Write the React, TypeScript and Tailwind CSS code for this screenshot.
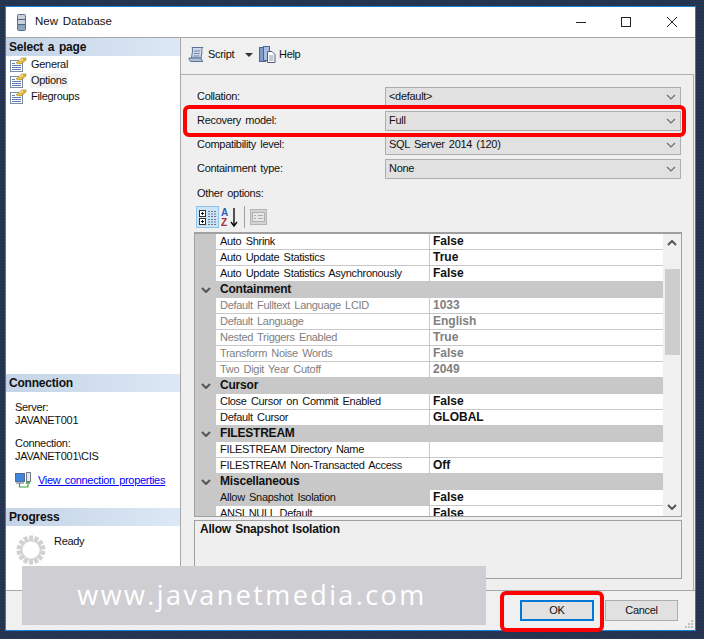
import React from 'react';

const font = "font-['Liberation_Sans',Arial,sans-serif]";

type Row =
  | { kind: 'cat'; label: string }
  | { kind: 'prop'; label: string; value?: string; disabled?: boolean; selected?: boolean };

const rows: Row[] = [
  { kind: 'prop', label: 'Auto Shrink', value: 'False' },
  { kind: 'prop', label: 'Auto Update Statistics', value: 'True' },
  { kind: 'prop', label: 'Auto Update Statistics Asynchronously', value: 'False' },
  { kind: 'cat', label: 'Containment' },
  { kind: 'prop', label: 'Default Fulltext Language LCID', value: '1033', disabled: true },
  { kind: 'prop', label: 'Default Language', value: 'English', disabled: true },
  { kind: 'prop', label: 'Nested Triggers Enabled', value: 'True', disabled: true },
  { kind: 'prop', label: 'Transform Noise Words', value: 'False', disabled: true },
  { kind: 'prop', label: 'Two Digit Year Cutoff', value: '2049', disabled: true },
  { kind: 'cat', label: 'Cursor' },
  { kind: 'prop', label: 'Close Cursor on Commit Enabled', value: 'False' },
  { kind: 'prop', label: 'Default Cursor', value: 'GLOBAL' },
  { kind: 'cat', label: 'FILESTREAM' },
  { kind: 'prop', label: 'FILESTREAM Directory Name' },
  { kind: 'prop', label: 'FILESTREAM Non-Transacted Access', value: 'Off' },
  { kind: 'cat', label: 'Miscellaneous' },
  { kind: 'prop', label: 'Allow Snapshot Isolation', value: 'False', selected: true },
  { kind: 'prop', label: 'ANSI NULL Default', value: 'False' },
];

const combos = [
  { label: 'Collation:', value: '<default>' },
  { label: 'Recovery model:', value: 'Full' },
  { label: 'Compatibility level:', value: 'SQL Server 2014 (120)' },
  { label: 'Containment type:', value: 'None' },
];

const Chevron = ({ up, bold }: { up?: boolean; bold?: boolean }) => (
  <svg width="10" height="6" viewBox="0 0 10 6" fill="none">
    <path
      d={up ? 'M1 5 L5 1 L9 5' : 'M1 1 L5 5 L9 1'}
      stroke={bold ? '#555555' : '#6a6a6a'}
      strokeWidth={bold ? 2 : 1.1}
    />
  </svg>
);

const PageIcon = () => (
  <svg width="17" height="15" viewBox="0 0 17 15">
    <rect x="0.5" y="3.5" width="12" height="11" fill="#fff" stroke="#7d8aa0" />
    <path d="M2 6.5h3M2 8.5h9M2 10.5h9M2 12.5h9" stroke="#5d7fb5" />
    <path d="M6 6 L12 1 L16 1 L16 3 L11 7 Z" fill="#e8b93c" stroke="#9a7a24" strokeWidth="0.6" />
    <path d="M9 4 L13 2" stroke="#fff2b8" />
  </svg>
);

const SectionHeader = ({ title }: { title: string }) => (
  <div className="h-[18px] bg-gradient-to-r from-[#c4d4e6] to-[#dce8f5] pl-[3px] flex items-center text-[12px] font-bold tracking-[-0.2px] leading-none">
    {title}
  </div>
);

const Spinner = () => (
  <svg width="30" height="30" viewBox="0 0 30 30">
    {Array.from({ length: 14 }).map((_, i) => (
      <rect
        key={i}
        x="13"
        y="0.5"
        width="4.2"
        height="6"
        fill="#d2d2d2"
        transform={`rotate(${(i * 360) / 14} 15 15)`}
      />
    ))}
  </svg>
);

export default function App() {
  return (
    <div
      className={`relative w-[704px] h-[639px] overflow-hidden pt-[6px] pl-[5px] bg-[#24344f] bg-[radial-gradient(#2b3f62_1px,transparent_1px)] bg-[length:3px_3px] text-[11px] tracking-[-0.3px] [word-spacing:1.5px] text-[#111] ${font}`}
    >
      {/* Window */}
      <div className="w-[691px] h-[625px] border border-[#1883d7] bg-[#f0f0f0] flex flex-col">
        {/* Title bar */}
        <div className="h-[31px] shrink-0 bg-white border-b border-[#a8a8a8] flex items-center relative">
          <svg className="ml-[11px]" width="9" height="17" viewBox="0 0 9 17">
            <rect x="0.5" y="0.5" width="8" height="16" rx="1" fill="#c9d3df" stroke="#5b6f8c" />
            <path d="M1 5.5h7M1 10.5h7" stroke="#4c6285" />
            <rect x="1" y="11" width="7" height="5" fill="#8fa3bd" />
          </svg>
          <span className="ml-[9px] text-[11.5px] tracking-normal">New Database</span>
          <div className="ml-auto flex items-center">
            <div className="w-[10px] h-[1px] bg-[#222]" />
            <div className="ml-[35px] w-[10px] h-[10px] border border-[#222]" />
            <svg className="ml-[36px] mr-[18px]" width="10" height="10" viewBox="0 0 10 10">
              <path d="M0 0 L10 10 M10 0 L0 10" stroke="#222" strokeWidth="1" />
            </svg>
          </div>
        </div>

        {/* Body */}
        <div className="h-[553px] shrink-0 flex border-b border-[#a8a8a8]">
          {/* Left pane */}
          <div className="w-[175px] shrink-0 bg-white border-r border-[#a8a8a8] flex flex-col">
            <SectionHeader title="Select a page" />
            <div className="pl-[4px]">
              {['General', 'Options', 'Filegroups'].map((p) => (
                <div key={p} className="h-[16px] flex items-center">
                  <PageIcon />
                  <span
                    className={`ml-[3px] px-[1px] h-[15px] leading-[15px] ${p === 'Options' ? 'bg-[#f2f2f2]' : ''}`}
                  >
                    {p}
                  </span>
                </div>
              ))}
            </div>
            <div className="mt-auto">
              <SectionHeader title="Connection" />
              <div className="h-[116px] pl-[9px] pt-[9px] leading-[13px]">
                <div>Server:</div>
                <div>JAVANET001</div>
                <div className="mt-[10px]">Connection:</div>
                <div>JAVANET001\CIS</div>
                <div className="mt-[9px] flex items-center">
                  <svg width="17" height="16" viewBox="0 0 17 16">
                    <rect x="0.5" y="1.5" width="9" height="8" fill="#3c86dc" stroke="#5a6a88" />
                    <rect x="11.5" y="0.5" width="4" height="9" fill="#e6e8ee" stroke="#77808f" />
                    <rect x="1" y="10" width="8" height="2" fill="#a9b4c6" />
                    <path d="M4.5 11 V15 H13 V10" fill="none" stroke="#3da23a" strokeWidth="1.2" />
                    <path d="M11 11.5 L13 9.5 L15 11.5" fill="none" stroke="#3da23a" strokeWidth="1.2" />
                  </svg>
                  <span className="ml-[6px] text-[#0000ff] underline whitespace-nowrap">View connection properties</span>
                </div>
              </div>
              <SectionHeader title="Progress" />
              <div className="h-[64px] pl-[10px] pt-[9px] flex items-start">
                <Spinner />
                <span className="ml-[8px] -mt-[2px]">Ready</span>
              </div>
            </div>
          </div>

          {/* Right pane */}
          <div className="flex-1 flex flex-col min-w-0">
            <div className="h-[36px] shrink-0 flex items-center pl-[7px] pb-[3px]">
              <svg width="17" height="17" viewBox="0 0 17 17">
                <path
                  d="M4 1.5 H15 C13.5 2.5 13.5 4.5 14 6 L13 12 H3.5 L4.5 5 C4.5 3.5 4.5 2.5 4 1.5 Z"
                  fill="#cfd8e6"
                  stroke="#5c7396"
                />
                <path d="M1 12 H13 C13.5 13.5 14 15 15 15.5 H3 C1.8 15.5 1 14 1 12 Z" fill="#aebdd4" stroke="#5c7396" />
                <path d="M6 5h6M6 7.5h5.5M5.5 10h6" stroke="#6e84a6" />
              </svg>
              <span className="ml-[3px] w-[26px]">Script</span>
              <div className="ml-[11px] w-0 h-0 border-x-[4px] border-x-transparent border-t-[4px] border-t-[#333]" />
              <svg className="ml-[6px]" width="17" height="17" viewBox="0 0 17 17">
                <rect x="0.5" y="1.5" width="6" height="14" fill="#7f9cc9" stroke="#4a6593" />
                <rect x="4.5" y="0.5" width="6" height="14" fill="#a9c0e0" stroke="#4a6593" />
                <path d="M8.5 5.5 H13 L16 8.5 V16.5 H8.5 Z" fill="#fff" stroke="#4a5c78" />
                <path d="M10 10h4.5M10 12h4.5M10 14h4.5" stroke="#8a95a8" />
              </svg>
              <span className="ml-[3px]">Help</span>
            </div>

            <div className="flex-1 border-t border-r border-[#b0b0b0] mr-[1px] bg-[#efefef] pl-[13px] pr-[11px] pt-[12px] flex flex-col min-h-0">
              {combos.map((c) => (
                <div key={c.label} className="h-[20px] mb-[4px] flex items-center shrink-0">
                  <span className="w-[191px] pl-[3px] pb-[1px] shrink-0">{c.label}</span>
                  <div className="w-[296px] h-[20px] bg-[#e1e1e1] border border-[#adadad] flex items-center justify-between pl-[3px] pr-[4px]">
                    <span className="pb-[1px]">{c.value}</span>
                    <Chevron />
                  </div>
                </div>
              ))}
              <div className="mt-[2px] pl-[3px] h-[16px] leading-[16px] shrink-0">Other options:</div>

              {/* Property grid toolbar */}
              <div className="mt-[3px] mb-[2px] h-[26px] flex items-center shrink-0 pl-[2px]">
                <div className="w-[23px] h-[22px] bg-[#cce4f7] border border-[#8fc3ec] flex items-center justify-center">
                  <svg width="18" height="17" viewBox="0 0 18 17">
                    <rect x="0.5" y="1.5" width="6" height="6" fill="#fff" stroke="#333" />
                    <rect x="0.5" y="9.5" width="6" height="6" fill="#fff" stroke="#333" />
                    <path d="M2 4.5h3M3.5 3v3M2 12.5h3M3.5 11v3" stroke="#111" />
                    <path d="M9 2.5h8M9 5h8M9 7.5h8M9 10.5h8M9 13h8M9 15.5h8" stroke="#6d7a8a" strokeDasharray="2 1" />
                  </svg>
                </div>
                <svg className="ml-[2px]" width="18" height="22" viewBox="0 0 18 22">
                  <text x="0" y="10" fontSize="10" fontWeight="700" fill="#2b5fb8" fontFamily="Liberation Sans">A</text>
                  <text x="0" y="20" fontSize="10" fontWeight="700" fill="#a3342e" fontFamily="Liberation Sans">Z</text>
                  <path d="M13 2 V19 M10 16 L13 20 L16 16" stroke="#111" strokeWidth="1.4" fill="none" />
                </svg>
                <div className="ml-[5px] w-[1px] h-[22px] bg-[#a0a0a0]" />
                <svg className="ml-[5px]" width="17" height="16" viewBox="0 0 17 16">
                  <rect x="0.5" y="0.5" width="16" height="15" fill="#d4d4d4" stroke="#b5b5b5" />
                  <rect x="2.5" y="3.5" width="12" height="9" fill="#e8e8e8" stroke="#b0b0b0" />
                  <path d="M4 6.5h2M8 6.5h5M4 9.5h2M8 9.5h5" stroke="#ababab" />
                </svg>
              </div>

              {/* Property grid */}
              <div className="h-[285px] shrink-0 border border-t-2 border-[#a0a0a0] bg-[#f0f0f0] flex overflow-hidden">
                <div className="w-[468px] shrink-0 overflow-hidden">
                  {rows.map((r) =>
                    r.kind === 'cat' ? (
                      <div key={r.label} className="h-[16px] flex bg-[#c8c8c8] text-[12px] font-bold tracking-[-0.2px] [word-spacing:0] leading-[15px]">
                        <div className="w-[21px] shrink-0 flex items-center justify-center">
                          <Chevron bold />
                        </div>
                        <span className="pl-[4px]">{r.label}</span>
                      </div>
                    ) : (
                      <div key={r.label} className="h-[16px] flex bg-[#c8c8c8]">
                        <div className="w-[21px] shrink-0" />
                        <div
                          className={`w-[213px] shrink-0 pl-[4px] leading-[15px] whitespace-nowrap border-b border-[#c8c8c8] ${r.selected ? 'bg-[#c8c8c8]' : 'bg-white'} ${r.disabled ? 'text-[#808080]' : ''}`}
                        >
                          {r.label}
                        </div>
                        <div
                          className={`flex-1 pl-[3px] leading-[15px] text-[12px] tracking-normal font-bold bg-white border-l border-b border-[#c8c8c8] ${r.disabled ? 'text-[#808080]' : ''}`}
                        >
                          {r.value}
                        </div>
                      </div>
                    ),
                  )}
                </div>
                {/* Scrollbar */}
                <div className="flex-1 flex flex-col items-center relative">
                  <div className="h-[18px] flex items-center justify-center">
                    <Chevron up bold />
                  </div>
                  <div className="mt-[17px] w-[15px] h-[86px] bg-[#cdcdcd]" />
                  <div className="mt-auto h-[18px] flex items-center justify-center">
                    <Chevron bold />
                  </div>
                </div>
              </div>

              {/* Description */}
              <div className="mt-[3px] h-[59px] shrink-0 border border-[#a0a0a0] pl-[5px] pt-[1px] text-[12px] font-bold tracking-[-0.2px] [word-spacing:1px] leading-[14px]">
                Allow Snapshot Isolation
              </div>
            </div>
          </div>
        </div>

        {/* Footer */}
        <div className="flex-1 flex justify-end items-start pt-[9px] pr-[17px] gap-[11px] relative">
          <div className="w-[74px] h-[21px] bg-[#e1e1e1] border-2 border-[#0078d7] flex items-center justify-center">OK</div>
          <div className="w-[73px] h-[21px] bg-[#e1e1e1] border border-[#adadad] flex items-center justify-center">Cancel</div>
          <svg className="absolute right-[1px] bottom-[1px]" width="10" height="10" viewBox="0 0 10 10">
            <path d="M7 1h2v2h-2zM4 4h2v2h-2zM7 4h2v2h-2zM1 7h2v2h-2zM4 7h2v2h-2zM7 7h2v2h-2z" fill="#c2c2c2" />
          </svg>
        </div>
      </div>

      {/* Screenshot annotations */}
      <div className="absolute left-[183px] top-[105px] w-[503px] h-[32px] border-[4px] border-[#ff0000] rounded-[6px]" />
      <div className="absolute left-[500px] top-[591px] w-[104px] h-[41px] border-[4px] border-[#ff0000] rounded-[6px]" />
      <div className="absolute left-[22px] top-[566px] w-[464px] h-[59px] bg-[#cfcfd3] flex items-center justify-center pr-[4px] text-white text-[27px] tracking-[2.4px] [word-spacing:0] font-['Open_Sans',sans-serif]">
        www.javanetmedia.com
      </div>
    </div>
  );
}
